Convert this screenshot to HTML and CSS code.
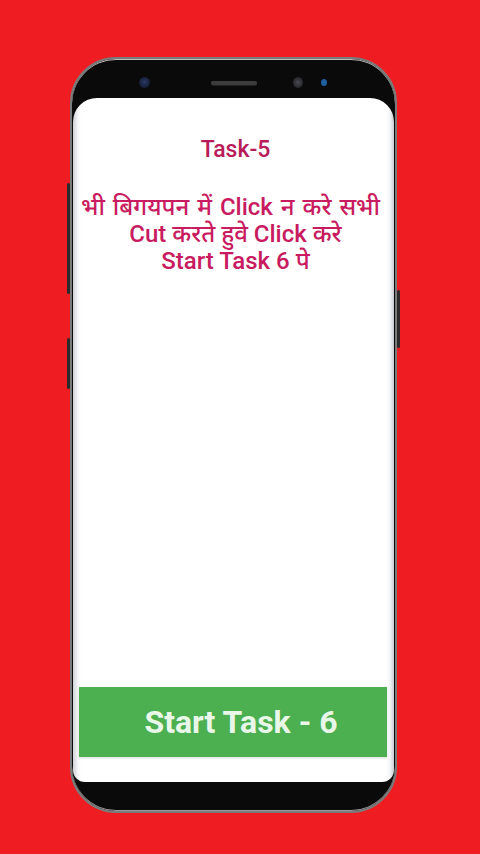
FILE: index.html
```html
<!DOCTYPE html>
<html lang="hi">
<head>
<meta charset="utf-8">
<title>Task-5</title>
<link rel="stylesheet" href="styles.css">
</head>
<body>
<div class="stage">
  <div class="phone">
    <span class="side-btn left-1"></span>
    <span class="side-btn left-2"></span>
    <span class="side-btn right-1"></span>
    <div class="top-bar">
      <span class="camera"></span>
      <span class="speaker"></span>
      <span class="sensor"></span>
      <span class="led"></span>
    </div>
    <div class="screen">
      <div class="content">
        <h1 class="title">Task-5</h1>
        <p class="message"><span class="line-wide">भी बिगयपन में Click न करे सभी</span><br>Cut करते हुवे Click करे<br>Start Task 6 पे</p>
      </div>
      <button class="start-btn">Start Task - 6</button>
    </div>
    <div class="bottom-bar"></div>
  </div>
</div>
</body>
</html>
```

FILE: styles.css
```css
html, body {
  margin: 0;
  padding: 0;
}
body {
  width: 480px;
  height: 854px;
  background: #ef1c21;
  overflow: hidden;
  font-family: Roboto, "Noto Sans Devanagari", "Noto Sans", sans-serif;
}
.stage {
  padding: 57px 0 0 70px;
}
.phone {
  position: relative;
  box-sizing: border-box;
  width: 327px;
  height: 756px;
  border-radius: 46px;
  background: #0a0a0a;
  border: 2px solid #7b7b7b;
  box-shadow: inset 0 1px 0 #bdbdbd, inset 0 -1px 0 #9a9a9a;
  padding: 0 1px;
  display: flex;
  flex-direction: column;
}
.side-btn {
  position: absolute;
  width: 3px;
  background: #2b2b2b;
  border-radius: 2px;
}
.left-1 { left: -5px; top: 124px; height: 111px; }
.left-2 { left: -5px; top: 279px; height: 51px; }
.right-1 { right: -5px; top: 231px; height: 58px; }

.top-bar {
  height: 39px;
  display: flex;
  align-items: center;
  padding: 8px 0 0 66px;
  box-sizing: border-box;
  flex-shrink: 0;
}
.camera {
  width: 11px;
  height: 11px;
  border-radius: 50%;
  background: radial-gradient(circle at 50% 45%, #2a3a66 0%, #141c33 70%);
}
.speaker {
  margin-left: 61px;
  width: 46px;
  height: 4px;
  border-radius: 2px;
  background: #3d3d3d;
  box-shadow: 0 1px 0 #222;
}
.sensor {
  margin-left: 36px;
  width: 10px;
  height: 11px;
  border-radius: 50%;
  background: radial-gradient(circle, #4a4a52 0%, #232328 75%);
}
.led {
  margin-left: 18px;
  width: 6px;
  height: 7px;
  border-radius: 50%;
  background: #1f5f9f;
}

.screen {
  flex: 1;
  background: linear-gradient(to right, #cfd3d8 0px, #f4f6f8 5px, #ffffff 8px, #ffffff calc(100% - 8px), #f2f4f7 calc(100% - 4px), #c9ccd1 100%);
  border-radius: 24px 24px 12px 12px;
  display: flex;
  flex-direction: column;
  overflow: hidden;
}
.content {
  flex: 1;
  text-align: center;
  color: #c81b60;
  padding-top: 38px;
  padding-left: 4px;
}
.title {
  margin: 0;
  font-size: 23px;
  line-height: 27px;
  font-weight: 500;
  color: #b81d5a;
}
.message {
  margin: 31px 0 0;
  font-size: 24px;
  line-height: 27px;
  font-weight: 500;
  white-space: nowrap;
}
.line-wide {
  display: inline-block;
  word-spacing: 2px;
  margin-right: 10px;
}
.start-btn {
  margin: 0 7px 25px 6px;
  height: 70px;
  border: 0;
  padding: 0 0 0 16px;
  background: #4caf50;
  color: #e9f7e9;
  font-family: Roboto, sans-serif;
  font-weight: 700;
  font-size: 32px;
  text-align: center;
  box-shadow: 0 1px 2px rgba(0,0,0,0.15);
}
.bottom-bar {
  height: 29px;
  flex-shrink: 0;
}
```
